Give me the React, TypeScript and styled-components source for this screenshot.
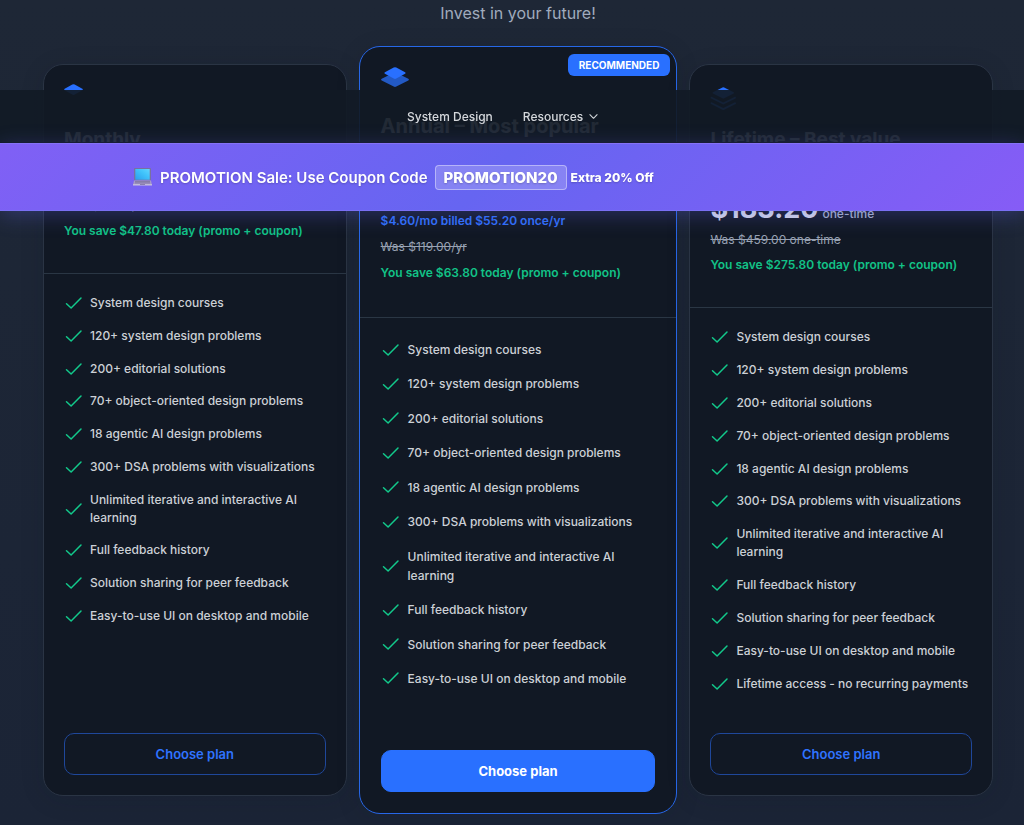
import React from "react";
import styled, { createGlobalStyle, css } from "styled-components";

const GlobalStyle = createGlobalStyle`
  *, *::before, *::after { box-sizing: border-box; }
  body {
    margin: 0;
    background: linear-gradient(180deg, #1e2736 0%, #1b2436 100%);
    background-attachment: fixed;
    font-family: Inter, "Liberation Sans", sans-serif;
    color: #d1d5db;
  }
  h2, p, ul { margin: 0; padding: 0; }
`;

const Page = styled.main`
  padding: 0 31px 11px 43px;
`;

const Tagline = styled.p`
  font-size: 16px;
  line-height: 26px;
  text-align: center;
  color: #a0abbd;
`;

const Plans = styled.section`
  display: grid;
  grid-template-columns: 1fr 1.05fr 1fr;
  gap: 12px;
  margin-top: 20px;
`;

const Card = styled.article<{ $featured?: boolean }>`
  position: relative;
  display: flex;
  flex-direction: column;
  margin: 18px 0;
  border: 1px solid #2a3444;
  border-radius: 20px;
  background: #111824;
  box-shadow: 0 4px 24px rgba(17, 24, 36, 0.12);
  font-size: 12px;
  line-height: 18px;
  ${(p) =>
    p.$featured &&
    css`
      margin: 0;
      border-color: #2767e8;
      border-radius: 21px;
      line-height: 19px;
    `}
`;

const CardHead = styled.header<{ $featured?: boolean }>`
  display: flex;
  flex-direction: column;
  gap: 4px;
  padding: 19px 20px 32px;
  border-bottom: 1px solid #2a3644;
  ${(p) =>
    p.$featured &&
    css`
      gap: 5px;
      padding: 19px 21px 34px;
    `}
`;

const PlanIcon = styled.svg`
  display: block;
  width: 28px;
  height: 26px;
`;

const Title = styled.h2<{ $featured?: boolean }>`
  margin-top: ${(p) => (p.$featured ? 14 : 12)}px;
  font-size: ${(p) => (p.$featured ? 20 : 19)}px;
  line-height: ${(p) => (p.$featured ? 30 : 28)}px;
  font-weight: 700;
  color: #e5e7eb;
`;

const Price = styled.p<{ $gap: number }>`
  margin-top: ${(p) => p.$gap}px;
  font-size: 27px;
  line-height: 33px;
  font-weight: 700;
  color: #d1d5e6;
  white-space: nowrap;
`;

const Period = styled.span`
  margin-left: 4px;
  font-size: 12px;
  line-height: 12px;
  font-weight: 500;
  color: #a3adc4;
`;

const Note = styled.p<{ $tone: "billed" | "was" | "save" }>`
  line-height: 21px;
  font-weight: 600;
  color: ${(p) => ({ billed: "#2f6ff8", was: "#98a2b3", save: "#12c287" })[p.$tone]};
  ${(p) =>
    p.$tone === "was" &&
    css`
      font-weight: 400;
      text-decoration: line-through;
    `}
`;

const Features = styled.ul<{ $featured?: boolean; $rows: number }>`
  display: flex;
  flex-direction: column;
  justify-content: space-between;
  list-style: none;
  min-height: ${(p) => p.$rows}px;
  margin: ${(p) => (p.$featured ? "22px 21px 62px" : "20px 20px 40px")};
  font-weight: 500;
  color: #ccd0d6;
`;

const Feature = styled.li<{ $featured?: boolean }>`
  display: flex;
  align-items: center;
  gap: ${(p) => (p.$featured ? 7 : 6)}px;
`;

const CheckIcon = styled.svg`
  flex: none;
  width: 20px;
  height: 18px;
`;

const ChooseButton = styled.button<{ $featured?: boolean }>`
  height: 42px;
  margin: auto 20px 20px;
  border: 1px solid #1f479a;
  border-radius: 10px;
  background: transparent;
  font-family: inherit;
  font-size: 13px;
  font-weight: 600;
  color: #2f73ff;
  cursor: pointer;
  ${(p) =>
    p.$featured &&
    css`
      margin: auto 21px 21px;
      border-color: #2970ff;
      background: #2970ff;
      font-weight: 700;
      color: #fff;
    `}
`;

const Badge = styled.span`
  position: absolute;
  top: 7px;
  right: 6px;
  padding: 0 11px;
  border-radius: 6px;
  background: #2970ff;
  font-size: 10px;
  line-height: 22px;
  font-weight: 700;
  color: #fff;
`;

const StickyBar = styled.div`
  position: fixed;
  z-index: 2;
  top: 90px;
  left: 0;
  right: 0;
`;

const Nav = styled.nav`
  display: flex;
  align-items: center;
  gap: 30px;
  height: 53px;
  padding-left: 407px;
  border-bottom: 1px solid #101622;
  background: rgba(17, 26, 37, 0.92);
`;

const NavLink = styled.a`
  font-size: 12px;
  font-weight: 500;
  color: #d5d8dc;
  text-decoration: none;
`;

const NavButton = styled.button`
  display: flex;
  align-items: center;
  gap: 6px;
  padding: 0;
  border: 0;
  background: none;
  font-family: inherit;
  font-size: 12px;
  font-weight: 500;
  color: #d5d8dc;
`;

const Promo = styled.aside`
  display: flex;
  align-items: center;
  height: 68px;
  padding-left: 133px;
  border-top: 1px solid #8572f6;
  border-bottom: 1px solid #7a70f4;
  background: linear-gradient(135deg, #8060f5 0%, #6665f1 48%, #865cf6 100%);
  box-shadow: 0 4px 20px rgba(99, 102, 241, 0.3);
  font-size: 15px;
  font-weight: 600;
  color: #fff;
  text-shadow: 0 1px 2px rgba(0, 0, 0, 0.2);
  white-space: nowrap;
`;

const PromoIcon = styled.svg`
  width: 19px;
  height: 18px;
  margin-right: 8px;
`;

const Coupon = styled.strong`
  margin: 0 4px 0 7px;
  padding: 0 8px;
  border: 1px solid rgba(255, 255, 255, 0.4);
  border-radius: 4px;
  background: rgba(255, 255, 255, 0.2);
  line-height: 23px;
  font-weight: 800;
`;

const Extra = styled.span`
  font-size: 12px;
  font-weight: 800;
`;

const MonthlyIcon = () => (
  <PlanIcon viewBox="0 0 28 26" aria-hidden="true">
    <path d="M8.300.6q1.200-.6 2.400 0l7.600 4.200q1 .7 0 1.400l-7.600 4.400q-1.200.6-2.400 0L.7 6.200q-1-.7 0-1.400z" fill="#2970ff" />
  </PlanIcon>
);

const AnnualIcon = () => (
  <PlanIcon viewBox="0 0 28 26" aria-hidden="true">
    <path d="M12.700 6.800q1.300-.7 2.600 0l12 6q1.300.8 0 1.600l-12 6.200q-1.300.7-2.600 0l-12-6.200q-1.300-.8 0-1.600z" fill="#2359c4" />
    <path d="M12.700 1.500q1.300-.7 2.600 0l8.800 4.700q1.200.8 0 1.600l-8.800 4.800q-1.300.7-2.600 0L3.900 7.800q-1.200-.8 0-1.600z" fill="#2970ff" />
  </PlanIcon>
);

const LifetimeIcon = () => (
  <PlanIcon viewBox="0 0 28 26" aria-hidden="true">
    <path d="M12.500 3.400q.8-.4 1.600 0l9.500 4.800q.9.600 0 1.200l-9.500 4.800q-.8.400-1.600 0L3 9.400q-.9-.6 0-1.200z" fill="#2970ff" />
    <path d="M1.600 13.700l11.700 5.800L25 13.700M1.600 19.300l11.700 5.800L25 19.300" fill="none" stroke="#2970ff" strokeWidth="1.800" strokeLinecap="round" strokeLinejoin="round" />
  </PlanIcon>
);

const Check = () => (
  <CheckIcon viewBox="0 0 20 18" aria-hidden="true">
    <path d="M2.500 9.700l4.600 4.300L17 4" fill="none" stroke="#12c98b" strokeWidth="1.500" strokeLinecap="round" strokeLinejoin="round" />
  </CheckIcon>
);

const Laptop = () => (
  <PromoIcon viewBox="0 0 19 18" aria-hidden="true">
    <defs>
      <linearGradient id="screen" x1="0" y1="1" x2="1" y2="0">
        <stop offset="0" stopColor="#2b9fee" />
        <stop offset="0.600" stopColor="#41c4fb" />
        <stop offset="1" stopColor="#61d5ff" />
      </linearGradient>
    </defs>
    <rect x="1" y="0" width="17" height="12.500" rx="1" fill="#79719f" />
    <rect x="2.300" y="1" width="14.400" height="10.700" fill="url(#screen)" />
    <path d="M1 12.500h17l1 4.500H0z" fill="#a59ac7" />
    <path d="M2 13.600h15M2 14.900h15" stroke="#756a9b" strokeWidth=".7" />
    <path d="M0 16.200h19v1.300H0z" fill="#cbc3dd" />
    <path d="M7 16h5v1H7z" fill="#8b80ad" />
  </PromoIcon>
);

const baseFeatures = [
  "System design courses",
  "120+ system design problems",
  "200+ editorial solutions",
  "70+ object-oriented design problems",
  "18 agentic AI design problems",
  "300+ DSA problems with visualizations",
  "Unlimited iterative and interactive AI learning",
  "Full feedback history",
  "Solution sharing for peer feedback",
  "Easy-to-use UI on desktop and mobile",
];

interface Plan {
  title: string;
  icon: React.ReactNode;
  featured?: boolean;
  price: string;
  period: string;
  priceGap: number;
  billed?: string;
  was: string;
  save: string;
  features: string[];
  listHeight: number;
}

const plans: Plan[] = [
  {
    title: "Monthly",
    icon: <MonthlyIcon />,
    price: "$11.20",
    period: "/month",
    priceGap: 0,
    was: "Was $59.00/mo",
    save: "You save $47.80 today (promo + coupon)",
    features: baseFeatures,
    listHeight: 331,
  },
  {
    title: "Annual – Most popular",
    icon: <AnnualIcon />,
    featured: true,
    price: "$55.20",
    period: "/year",
    priceGap: 26,
    billed: "$4.60/mo billed $55.20 once/yr",
    was: "Was $119.00/yr",
    save: "You save $63.80 today (promo + coupon)",
    features: baseFeatures,
    listHeight: 348,
  },
  {
    title: "Lifetime – Best value",
    icon: <LifetimeIcon />,
    price: "$183.20",
    period: "one-time",
    priceGap: 34,
    was: "Was $459.00 one-time",
    save: "You save $275.80 today (promo + coupon)",
    features: [...baseFeatures, "Lifetime access - no recurring payments"],
    listHeight: 365,
  },
];

const PlanCard = ({ plan }: { plan: Plan }) => (
  <Card $featured={plan.featured}>
    {plan.featured && <Badge>RECOMMENDED</Badge>}
    <CardHead $featured={plan.featured}>
      {plan.icon}
      <Title $featured={plan.featured}>{plan.title}</Title>
      <Price $gap={plan.priceGap}>
        {plan.price}
        <Period>{plan.period}</Period>
      </Price>
      {plan.billed && <Note $tone="billed">{plan.billed}</Note>}
      <Note $tone="was">{plan.was}</Note>
      <Note $tone="save">{plan.save}</Note>
    </CardHead>
    <Features $featured={plan.featured} $rows={plan.listHeight}>
      {plan.features.map((text) => (
        <Feature key={text} $featured={plan.featured}>
          <Check />
          <span>{text}</span>
        </Feature>
      ))}
    </Features>
    <ChooseButton type="button" $featured={plan.featured}>
      Choose plan
    </ChooseButton>
  </Card>
);

export default function App() {
  return (
    <>
      <GlobalStyle />
      <StickyBar>
        <Nav>
          <NavLink href="#system-design">System Design</NavLink>
          <NavButton type="button">
            Resources
            <svg width="9" height="9" viewBox="0 0 10 10" aria-hidden="true">
              <path d="M1 3l4 4 4-4" fill="none" stroke="#d5d8dc" strokeWidth="1.200" strokeLinecap="round" strokeLinejoin="round" />
            </svg>
          </NavButton>
        </Nav>
        <Promo>
          <Laptop />
          <span>PROMOTION Sale: Use Coupon Code</span>
          <Coupon>PROMOTION20</Coupon>
          <Extra>Extra 20% Off</Extra>
        </Promo>
      </StickyBar>
      <Page>
        <Tagline>Invest in your future!</Tagline>
        <Plans>
          {plans.map((plan) => (
            <PlanCard key={plan.title} plan={plan} />
          ))}
        </Plans>
      </Page>
    </>
  );
}
